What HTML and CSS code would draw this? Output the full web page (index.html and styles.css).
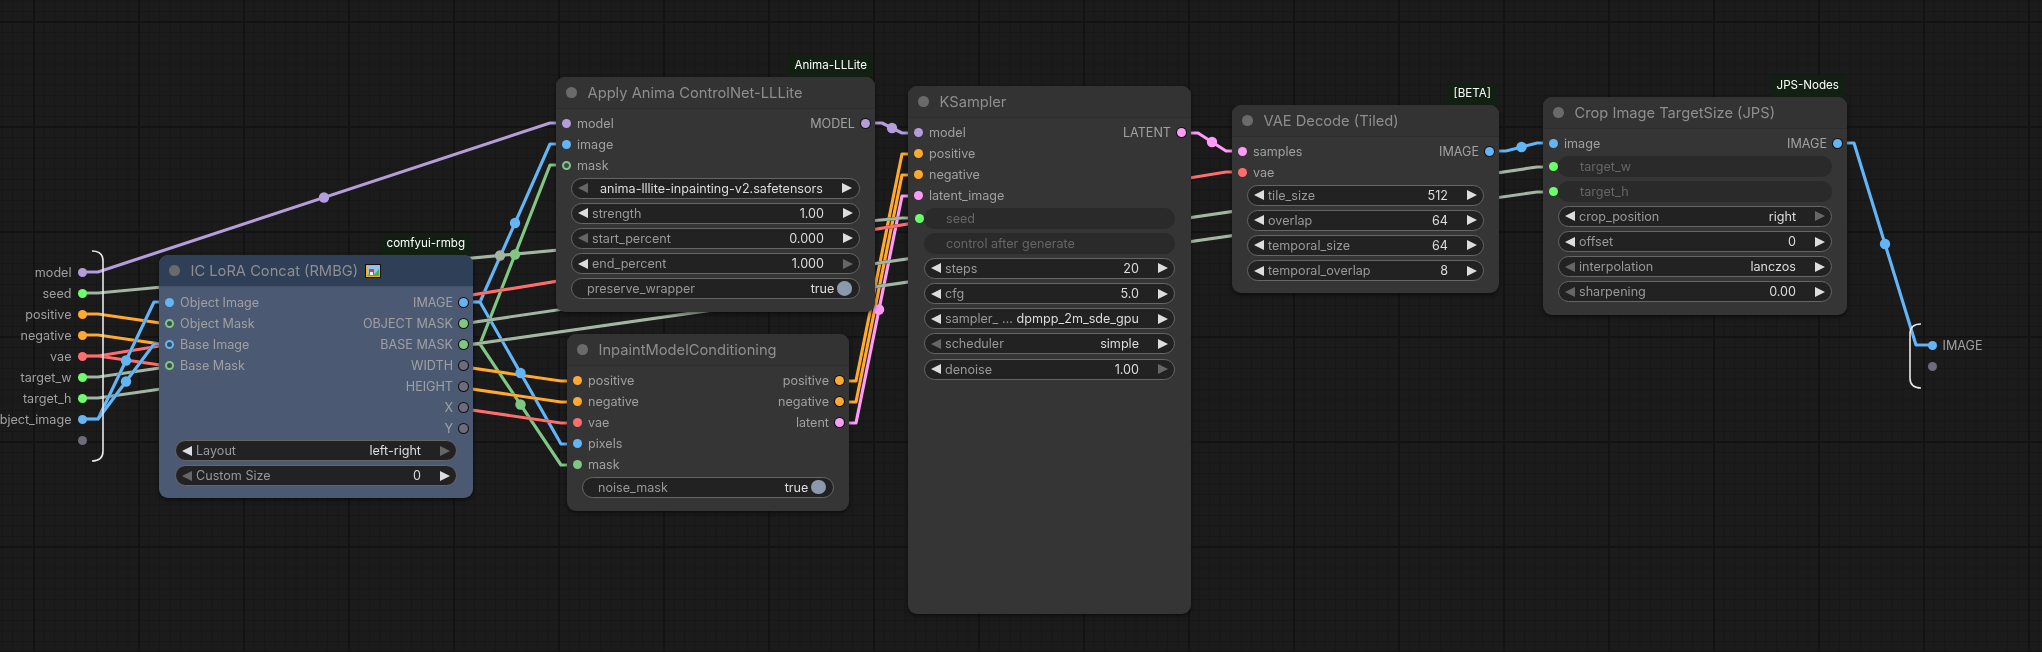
FILE: index.html
```html
<!DOCTYPE html>
<html lang="en">
<head>
    <meta charset="UTF-8">
    <meta name="viewport" content="width=device-width, initial-scale=1.0">
    <title>ComfyUI subgraph</title>
    <link rel="stylesheet" href="styles.css">
</head>
<body>
<div class="canvas">
    <svg class="wires" width="2042" height="652" viewBox="0 0 2042 652">
        <g class="wire-set" fill="none" stroke-width="3.2" stroke-linejoin="round">
            <path stroke="#b39ddb" d="M82 272H98L550 123H566"/>
            <path stroke="#b39ddb" d="M866 123H882L902 133H918"/>
            <path stroke="#64b5f6" d="M464 302H480L550 144H566"/>
            <path stroke="#64b5f6" d="M464 302H480L561 444H577"/>
            <path stroke="#81c784" d="M464 344H480L550 165H566"/>
            <path stroke="#81c784" d="M464 344H480L561 465H577"/>
            <path stroke="#ffa931" d="M82 314H98L561 381H577"/>
            <path stroke="#ffa931" d="M82 335H98L561 402H577"/>
            <path stroke="#ffa931" d="M840 381H856L902 154H918"/>
            <path stroke="#ffa931" d="M840 402H856L902 175H918"/>
            <path stroke="#ff9cf9" d="M840 423H856L902 196H918"/>
            <path stroke="#ff9cf9" d="M1182 133H1198L1226 151H1242"/>
            <path stroke="#ff6e6e" d="M82 356H98L561 423H577"/>
            <path stroke="#ff6e6e" d="M82 356H98L1226 172H1242"/>
            <path stroke="#a3b5a3" d="M82 293H98L902 218H918"/>
            <path stroke="#a3b5a3" d="M82 377H98L1537 167H1553"/>
            <path stroke="#a3b5a3" d="M82 398H98L1537 192H1553"/>
            <path stroke="#64b5f6" d="M82 419H98L154 302H170"/>
            <path stroke="#64b5f6" d="M82 419H98L154 344H170"/>
            <path stroke="#64b5f6" d="M1490 151H1506L1537 143H1553"/>
            <path stroke="#64b5f6" d="M1838 143H1854L1916 345H1932"/>
        </g>
        <g class="wire-dots">
            <circle fill="#b39ddb" cx="324" cy="197.5" r="5.2"/>
            <circle fill="#b39ddb" cx="892" cy="128" r="5.2"/>
            <circle fill="#64b5f6" cx="515" cy="223" r="5.2"/>
            <circle fill="#64b5f6" cx="520.5" cy="373" r="5.2"/>
            <circle fill="#81c784" cx="515" cy="254.5" r="5.2"/>
            <circle fill="#81c784" cx="520.5" cy="404.5" r="5.2"/>
            <circle fill="#ff9cf9" cx="879" cy="309.5" r="5.2"/>
            <circle fill="#ff9cf9" cx="1212" cy="142" r="5.2"/>
            <circle fill="#a3b5a3" cx="500" cy="255.5" r="5.2"/>
            <circle fill="#64b5f6" cx="126" cy="360.5" r="5.2"/>
            <circle fill="#64b5f6" cx="126" cy="381.5" r="5.2"/>
            <circle fill="#64b5f6" cx="1521.5" cy="147" r="5.2"/>
            <circle fill="#64b5f6" cx="1885" cy="244" r="5.2"/>
        </g>
        <g fill="none" stroke="#e8e8e8" stroke-width="1.6">
            <path d="M92 251Q103 251 103 261V451Q103 461 92 461"/>
            <path d="M1921 324Q1910 324 1910 334V378Q1910 388 1921 388"/>
        </g>
    </svg>

    <div class="io io-in">
        <div class="io-row"><span>model</span><i class="slot s-model"></i></div>
        <div class="io-row"><span>seed</span><i class="slot s-int"></i></div>
        <div class="io-row"><span>positive</span><i class="slot s-cond"></i></div>
        <div class="io-row"><span>negative</span><i class="slot s-cond"></i></div>
        <div class="io-row"><span>vae</span><i class="slot s-vae"></i></div>
        <div class="io-row"><span>target_w</span><i class="slot s-int"></i></div>
        <div class="io-row"><span>target_h</span><i class="slot s-int"></i></div>
        <div class="io-row"><span>object_image</span><i class="slot s-image"></i></div>
        <div class="io-row"><i class="slot s-none"></i></div>
    </div>

    <div class="io io-out">
        <div class="io-row"><i class="slot s-image"></i><span>IMAGE</span></div>
        <div class="io-row"><i class="slot s-none"></i></div>
    </div>

    <div class="node node-ic">
        <div class="badge">comfyui-rmbg</div>
        <div class="title">
            <i class="dot"></i><span>IC LoRA Concat (RMBG)</span>
            <svg class="title-icon" width="16" height="14" viewBox="0 0 16 14">
                <rect x="0.5" y="0.5" width="15" height="13" fill="#f2b01e" stroke="#111"/>
                <rect x="2" y="2" width="12" height="10" fill="#8cc4ee"/>
                <path d="M2 12L6 8L10 10L14 5V12Z" fill="#4caf50"/>
                <rect x="4" y="5" width="5" height="5" fill="#c9453f"/>
                <rect x="5" y="8" width="3" height="3" fill="#f4f4f4"/>
            </svg>
        </div>
        <div class="slots slots-ic">
            <div class="row"><div class="port"><i class="slot s-image"></i><span>Object Image</span></div><div class="port"><span>IMAGE</span><i class="slot s-image ring"></i></div></div>
            <div class="row"><div class="port"><i class="slot s-mask hollow"></i><span>Object Mask</span></div><div class="port"><span>OBJECT MASK</span><i class="slot s-mask ring"></i></div></div>
            <div class="row"><div class="port"><i class="slot s-image hollow"></i><span>Base Image</span></div><div class="port"><span>BASE MASK</span><i class="slot s-mask ring"></i></div></div>
            <div class="row"><div class="port"><i class="slot s-mask hollow"></i><span>Base Mask</span></div><div class="port"><span>WIDTH</span><i class="slot s-none ring"></i></div></div>
            <div class="row"><div class="port"></div><div class="port"><span>HEIGHT</span><i class="slot s-none ring"></i></div></div>
            <div class="row"><div class="port"></div><div class="port"><span>X</span><i class="slot s-none ring"></i></div></div>
            <div class="row"><div class="port"></div><div class="port"><span>Y</span><i class="slot s-none ring"></i></div></div>
        </div>
        <div class="stack">
            <div class="widget"><i class="arrow left"></i><span class="label">Layout</span><span class="value">left-right</span><i class="arrow right dim"></i></div>
            <div class="widget"><i class="arrow left dim"></i><span class="label">Custom Size</span><span class="value">0</span><i class="arrow right"></i></div>
        </div>
    </div>

    <div class="node node-apply">
        <div class="badge">Anima-LLLite</div>
        <div class="title"><i class="dot"></i><span>Apply Anima ControlNet-LLLite</span></div>
        <div class="slots">
            <div class="row"><div class="port"><i class="slot s-model"></i><span>model</span></div><div class="port"><span>MODEL</span><i class="slot s-model ring"></i></div></div>
            <div class="row"><div class="port"><i class="slot s-image"></i><span>image</span></div></div>
            <div class="row"><div class="port"><i class="slot s-mask hollow"></i><span>mask</span></div></div>
        </div>
        <div class="stack">
            <div class="widget"><i class="arrow left dim"></i><span class="value center">anima-lllite-inpainting-v2.safetensors</span><i class="arrow right"></i></div>
            <div class="widget"><i class="arrow left"></i><span class="label">strength</span><span class="value">1.00</span><i class="arrow right"></i></div>
            <div class="widget"><i class="arrow left dim"></i><span class="label">start_percent</span><span class="value">0.000</span><i class="arrow right"></i></div>
            <div class="widget"><i class="arrow left"></i><span class="label">end_percent</span><span class="value">1.000</span><i class="arrow right dim"></i></div>
            <div class="widget toggle"><span class="label">preserve_wrapper</span><span class="value">true</span><i class="knob"></i></div>
        </div>
    </div>

    <div class="node node-inpaint">
        <div class="title"><i class="dot"></i><span>InpaintModelConditioning</span></div>
        <div class="slots">
            <div class="row"><div class="port"><i class="slot s-cond"></i><span>positive</span></div><div class="port"><span>positive</span><i class="slot s-cond ring"></i></div></div>
            <div class="row"><div class="port"><i class="slot s-cond"></i><span>negative</span></div><div class="port"><span>negative</span><i class="slot s-cond ring"></i></div></div>
            <div class="row"><div class="port"><i class="slot s-vae"></i><span>vae</span></div><div class="port"><span>latent</span><i class="slot s-latent ring"></i></div></div>
            <div class="row"><div class="port"><i class="slot s-image"></i><span>pixels</span></div></div>
            <div class="row"><div class="port"><i class="slot s-mask"></i><span>mask</span></div></div>
        </div>
        <div class="stack">
            <div class="widget toggle"><span class="label">noise_mask</span><span class="value">true</span><i class="knob"></i></div>
        </div>
    </div>

    <div class="node node-ksampler">
        <div class="title"><i class="dot"></i><span>KSampler</span></div>
        <div class="slots">
            <div class="row"><div class="port"><i class="slot s-model"></i><span>model</span></div><div class="port"><span>LATENT</span><i class="slot s-latent ring"></i></div></div>
            <div class="row"><div class="port"><i class="slot s-cond"></i><span>positive</span></div></div>
            <div class="row"><div class="port"><i class="slot s-cond"></i><span>negative</span></div></div>
            <div class="row"><div class="port"><i class="slot s-latent"></i><span>latent_image</span></div></div>
        </div>
        <div class="stack">
            <div class="widget muted"><i class="slot s-int on-widget"></i><span class="label">seed</span></div>
            <div class="widget muted"><span class="label">control after generate</span></div>
            <div class="widget"><i class="arrow left"></i><span class="label">steps</span><span class="value">20</span><i class="arrow right"></i></div>
            <div class="widget"><i class="arrow left"></i><span class="label">cfg</span><span class="value">5.0</span><i class="arrow right"></i></div>
            <div class="widget"><i class="arrow left"></i><span class="label">sampler_ …</span><span class="value">dpmpp_2m_sde_gpu</span><i class="arrow right"></i></div>
            <div class="widget"><i class="arrow left dim"></i><span class="label">scheduler</span><span class="value">simple</span><i class="arrow right"></i></div>
            <div class="widget"><i class="arrow left"></i><span class="label">denoise</span><span class="value">1.00</span><i class="arrow right dim"></i></div>
        </div>
    </div>

    <div class="node node-vae">
        <div class="badge">[BETA]</div>
        <div class="title"><i class="dot"></i><span>VAE Decode (Tiled)</span></div>
        <div class="slots">
            <div class="row"><div class="port"><i class="slot s-latent"></i><span>samples</span></div><div class="port"><span>IMAGE</span><i class="slot s-image ring"></i></div></div>
            <div class="row"><div class="port"><i class="slot s-vae"></i><span>vae</span></div></div>
        </div>
        <div class="stack">
            <div class="widget"><i class="arrow left"></i><span class="label">tile_size</span><span class="value">512</span><i class="arrow right"></i></div>
            <div class="widget"><i class="arrow left"></i><span class="label">overlap</span><span class="value">64</span><i class="arrow right"></i></div>
            <div class="widget"><i class="arrow left"></i><span class="label">temporal_size</span><span class="value">64</span><i class="arrow right"></i></div>
            <div class="widget"><i class="arrow left"></i><span class="label">temporal_overlap</span><span class="value">8</span><i class="arrow right"></i></div>
        </div>
    </div>

    <div class="node node-crop">
        <div class="badge">JPS-Nodes</div>
        <div class="title"><i class="dot"></i><span>Crop Image TargetSize (JPS)</span></div>
        <div class="slots">
            <div class="row"><div class="port"><i class="slot s-image"></i><span>image</span></div><div class="port"><span>IMAGE</span><i class="slot s-image ring"></i></div></div>
        </div>
        <div class="stack">
            <div class="widget muted"><i class="slot s-int on-widget"></i><span class="label">target_w</span></div>
            <div class="widget muted"><i class="slot s-int on-widget"></i><span class="label">target_h</span></div>
            <div class="widget"><i class="arrow left"></i><span class="label">crop_position</span><span class="value">right</span><i class="arrow right dim"></i></div>
            <div class="widget"><i class="arrow left"></i><span class="label">offset</span><span class="value">0</span><i class="arrow right"></i></div>
            <div class="widget"><i class="arrow left dim"></i><span class="label">interpolation</span><span class="value">lanczos</span><i class="arrow right"></i></div>
            <div class="widget"><i class="arrow left dim"></i><span class="label">sharpening</span><span class="value">0.00</span><i class="arrow right"></i></div>
        </div>
    </div>
</div>
</body>
</html>
```

FILE: styles.css
```css
body {
    margin: 0;
    background-color: #1a1a1a;
    font-family: "Inter", "Liberation Sans", sans-serif;
    font-size: 12.6px;
    color: #a0a0a0;
    overflow: hidden;
}
.canvas {
    position: relative;
    width: 2042px;
    height: 652px;
    overflow: hidden;
    background-color: #1b1b1b;
    background-image:
        linear-gradient(to right, #131313 2px, transparent 2px),
        linear-gradient(to bottom, #131313 2px, transparent 2px),
        linear-gradient(to right, #171717 1px, transparent 1px),
        linear-gradient(to bottom, #171717 1px, transparent 1px);
    background-size: 105px 105px, 105px 105px, 10.5px 10.5px, 10.5px 10.5px;
    background-position: 33px 0, 0 21px, 1.5px 0, 0 0.5px;
    filter: blur(0.3px);
}
.wires {
    position: absolute;
    left: 0;
    top: 0;
}
.wire-set path {
    filter: drop-shadow(0 0 0.6px rgba(0,0,0,0.9));
}

/* group inputs and outputs */
.io {
    position: absolute;
}
.io-row {
    display: flex;
    align-items: center;
    height: 21px;
    gap: 6px;
}
.io-in {
    left: -30px;
    top: 261.5px;
    width: 116.5px;
}
.io-in .io-row {
    justify-content: flex-end;
}
.io-out {
    left: 1927.5px;
    top: 334.5px;
}

/* nodes */
.node {
    position: absolute;
    background-color: #353535;
    border-radius: 9px;
    box-shadow: 0 2px 4px rgba(0,0,0,0.5);
}
.node-ic {
    left: 159px;
    top: 255px;
    width: 314px;
    height: 243px;
    background-color: #4b5a72;
}
.node-ic .title {
    background-color: #2f3f58;
    border-bottom-color: #43526a;
}
.node-apply {
    left: 556px;
    top: 77px;
    width: 319px;
    height: 235px;
}
.node-inpaint {
    left: 567px;
    top: 334px;
    width: 282px;
    height: 177px;
}
.node-ksampler {
    left: 908px;
    top: 86px;
    width: 283px;
    height: 528px;
}
.node-vae {
    left: 1232px;
    top: 105px;
    width: 267px;
    height: 188px;
}
.node-crop {
    left: 1543px;
    top: 97px;
    width: 304px;
    height: 218px;
}
.title {
    display: flex;
    align-items: center;
    gap: 11px;
    box-sizing: border-box;
    height: 32px;
    padding-left: 10px;
    font-size: 14.7px;
    color: #8e8e8e;
    background-color: #333;
    border-bottom: 1px solid #2e2e2e;
    border-radius: 9px 9px 0 0;
}
.dot {
    width: 10.5px;
    height: 10.5px;
    border-radius: 50%;
    background-color: #6a6a6a;
}
.title-icon {
    margin-left: -4px;
}
.badge {
    position: absolute;
    right: 2px;
    bottom: 100%;
    padding: 0 6px;
    height: 22px;
    font-size: 11.6px;
    line-height: 21px;
    color: #fff;
    background-color: #112012;
    border-radius: 5px 5px 0 0;
}
.slots {
    padding-top: 4px;
}
.slots-ic {
    padding-top: 4.5px;
}
.row {
    display: flex;
    justify-content: space-between;
    align-items: center;
    height: 21px;
    padding: 0 5px 0 6px;
}
.port {
    display: flex;
    align-items: center;
    gap: 6px;
}
.slot {
    flex: none;
    box-sizing: border-box;
    width: 9px;
    height: 9px;
    border-radius: 50%;
}
.s-model { background-color: #b39ddb; }
.s-image { background-color: #64b5f6; }
.s-mask { background-color: #81c784; }
.s-cond { background-color: #ffa931; }
.s-latent { background-color: #ff9cf9; }
.s-vae { background-color: #ff6e6e; }
.s-int { background-color: #6cff6c; }
.s-none { background-color: #6c6c7c; }
.ring {
    box-shadow: 0 0 0 1px #111;
}
.hollow {
    border: 2.5px solid #81c784;
    background-color: #3d4a52;
}
.s-image.hollow {
    border-color: #64b5f6;
}

/* widgets */
.stack {
    display: flex;
    flex-direction: column;
    gap: 4.2px;
    margin-top: 1.5px;
    padding: 0 15px;
}
.node-ic .stack,
.node-ksampler .stack {
    padding: 0 16px;
}
.widget {
    position: relative;
    display: flex;
    align-items: center;
    box-sizing: border-box;
    height: 21px;
    padding: 0 6px;
    color: #999;
    background-color: #222;
    border: 1px solid #666;
    border-radius: 11px;
}
.widget .label {
    margin-left: 4px;
}
.widget .value {
    margin-left: auto;
    margin-right: 19px;
    color: #ddd;
}
.widget .value.center {
    margin-left: 12px;
}
.arrow {
    flex: none;
    width: 0;
    height: 0;
    border-style: solid;
    border-color: transparent;
}
.arrow.left {
    border-width: 5px 10.5px 5px 0;
    border-right-color: #ddd;
}
.arrow.right {
    border-width: 5px 0 5px 10.5px;
    border-left-color: #ddd;
}
.arrow.left.dim {
    border-right-color: #666;
}
.arrow.right.dim {
    border-left-color: #666;
}
.toggle {
    padding: 0 7px 0 11px;
}
.toggle .value {
    margin-right: 3px;
}
.knob {
    width: 14.7px;
    height: 14.7px;
    border-radius: 50%;
    background-color: #8a9aac;
}
.muted {
    padding-left: 21px;
    color: #666;
    background-color: #2a2a2a;
    border-color: transparent;
}
.muted .label {
    margin-left: 0;
}
.on-widget {
    position: absolute;
    left: -10px;
    top: 5px;
}
```
